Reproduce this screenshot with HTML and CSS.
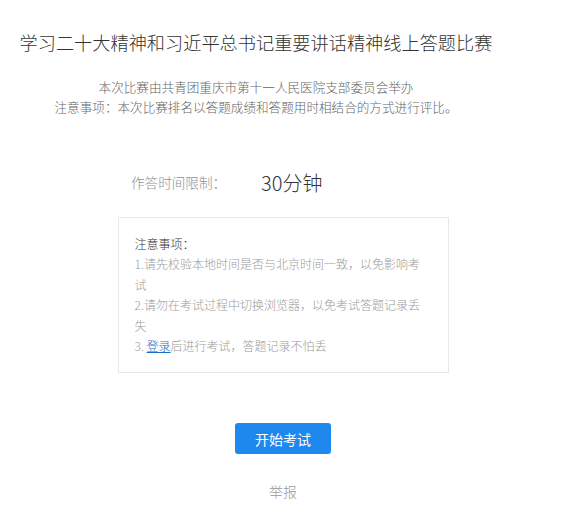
FILE: index.html
```html
<!DOCTYPE html>
<html lang="zh-CN">
<head>
<meta charset="utf-8">
<title>答题比赛</title>
<link rel="stylesheet" href="styles.css">
</head>
<body>
<div class="top">
  <h1 class="title">学习二十大精神和习近平总书记重要讲话精神线上答题比赛</h1>
  <div class="sub">
    <p>本次比赛由共青团重庆市第十一人民医院支部委员会举办</p>
    <p>注意事项：本次比赛排名以答题成绩和答题用时相结合的方式进行评比。</p>
  </div>
</div>
<div class="main">
  <div class="time-row">
    <span class="time-label">作答时间限制：</span>
    <span class="time-value">30分钟</span>
  </div>
  <div class="notice">
    <p class="notice-head">注意事项：</p>
    <p>1.请先校验本地时间是否与北京时间一致，以免影响考试</p>
    <p>2.请勿在考试过程中切换浏览器，以免考试答题记录丢失</p>
    <p>3. <a class="login" href="#">登录</a>后进行考试，答题记录不怕丢</p>
  </div>
  <button class="start">开始考试</button>
  <div class="report">举报</div>
</div>
</body>
</html>
```
FILE: styles.css
```css
html, body {
  margin: 0;
  padding: 0;
  background: #ffffff;
  font-family: "Noto Sans CJK SC", "Noto Sans", sans-serif;
  font-weight: 300;
}
p { margin: 0; }
.top {
  width: 512px;
  text-align: center;
  padding-top: 28px;
}
.title {
  margin: 0;
  font-size: 18.2px;
  line-height: 28px;
  font-weight: 300;
  color: #333333;
}
.sub {
  margin-top: 21px;
  font-size: 12.6px;
  line-height: 20px;
  color: #666666;
}
.main {
  width: 566px;
  display: flex;
  flex-direction: column;
  align-items: center;
  margin-top: 50px;
}
.time-row {
  align-self: flex-start;
  margin-left: 131px;
  display: flex;
  align-items: center;
  height: 30px;
}
.time-label {
  font-size: 13.6px;
  color: #8a8f99;
  width: 130px;
}
.time-value {
  font-size: 20px;
  color: #333333;
}
.notice {
  margin-top: 20px;
  width: 297px;
  padding: 16px;
  border: 1px solid #e8e8e8;
  font-size: 12px;
  line-height: 20.4px;
  color: #9a9a9a;
}
.notice-head {
  color: #333333;
}
.login {
  color: #1a6fc9;
  text-decoration: underline;
}
.start {
  margin-top: 50px;
  width: 96px;
  height: 31px;
  border: none;
  border-radius: 3px;
  background: #1e88ef;
  color: #ffffff;
  font-family: inherit;
  font-size: 14px;
  font-weight: 400;
  padding: 0;
}
.report {
  margin-top: 27px;
  font-size: 14px;
  line-height: 20px;
  color: #999999;
}
```
